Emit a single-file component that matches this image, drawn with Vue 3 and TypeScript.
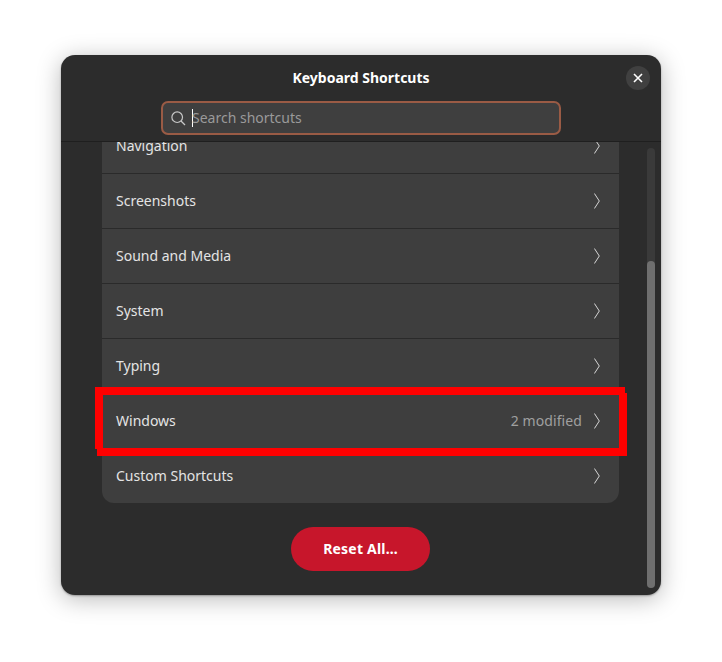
<script setup lang="ts">
const rows = [
  { title: 'Navigation' },
  { title: 'Screenshots' },
  { title: 'Sound and Media' },
  { title: 'System' },
  { title: 'Typing' },
  { title: 'Windows', note: '2 modified' },
  { title: 'Custom Shortcuts' },
]
</script>

<template>
  <div class="page">
    <div class="dialog">
      <header class="header">
        <div class="titleRow">
          <h1 class="title">Keyboard Shortcuts</h1>
          <button class="close" aria-label="Close">
            <svg width="10" height="10" viewBox="0 0 10 10">
              <path d="M1 1 9 9M9 1 1 9" stroke="#fff" stroke-width="1.6" fill="none" />
            </svg>
          </button>
        </div>
        <div class="search">
          <svg class="searchIcon" width="15" height="15" viewBox="0 0 15 15">
            <circle cx="6.2" cy="6.2" r="5.3" stroke="#c8c8c8" stroke-width="1.2" fill="none" />
            <path d="M10 10 14 14" stroke="#c8c8c8" stroke-width="1.2" fill="none" />
          </svg>
          <span class="caret"></span>
          <span class="placeholder">Search shortcuts</span>
        </div>
      </header>

      <div class="body">
        <div class="list">
          <div v-for="row in rows" :key="row.title" class="row">
            <span class="rowTitle">{{ row.title }}</span>
            <span v-if="row.note" class="note">{{ row.note }}</span>
            <svg class="chevron" width="6" height="16" viewBox="0 0 6 16">
              <path d="M0.4 0.5 5.3 8 0.4 15.5" stroke="#d6d6d6" stroke-width="1" fill="none" />
            </svg>
          </div>
        </div>
        <button class="reset"><span class="resetLabel">Reset All…</span></button>
        <div class="scrollbar"><div class="thumb"></div></div>
      </div>

      <!-- hand drawn highlight around the Windows row -->
      <svg class="highlight" width="540" height="80" viewBox="0 0 540 80">
        <rect x="0" y="5" width="530" height="8" fill="#ff0000" />
        <rect x="0" y="5" width="8" height="62" fill="#ff0000" />
        <rect x="2" y="66" width="530" height="8" fill="#ff0000" />
        <rect x="524" y="11" width="8" height="63" fill="#ff0000" />
      </svg>
    </div>
  </div>
</template>

<style>
body {
  background: #ffffff;
}
</style>

<style scoped>
.page {
  width: 722px;
  height: 662px;
  padding: 55px 61px 67px;
  box-sizing: border-box;
  font-family: "Noto Sans", sans-serif;
}

.dialog {
  position: relative;
  width: 600px;
  height: 540px;
  display: flex;
  flex-direction: column;
  border-radius: 14px;
  background: #2c2c2c;
  box-shadow: 0 1px 2px rgba(0, 0, 0, 0.3), 0 4px 24px rgba(0, 0, 0, 0.28);
}

.header {
  height: 87px;
  flex: none;
  box-sizing: border-box;
  display: flex;
  flex-direction: column;
  align-items: center;
  border-bottom: 1px solid #1f1f1f;
  border-radius: 14px 14px 0 0;
}

.titleRow {
  width: 100%;
  height: 46px;
  flex: none;
  display: flex;
  align-items: center;
  justify-content: center;
  position: relative;
}

.title {
  margin: 0 0 2px;
  font-size: 14px;
  font-weight: 700;
  color: #ffffff;
}

.close {
  position: absolute;
  right: 11px;
  top: 11px;
  width: 24px;
  height: 24px;
  padding: 0;
  border: none;
  border-radius: 50%;
  background: #404040;
  display: flex;
  align-items: center;
  justify-content: center;
}

.search {
  width: 400px;
  height: 34px;
  box-sizing: border-box;
  display: flex;
  align-items: center;
  padding-left: 8px;
  border: 2px solid #9a5b45;
  border-radius: 7px;
  background: #3f3f3f;
}

.searchIcon {
  flex: none;
  margin-right: 6px;
}

.caret {
  width: 1px;
  height: 18px;
  background: #ffffff;
}

.placeholder {
  margin: 0 0 2px -1px;
  font-size: 14px;
  color: #9a9a9a;
}

.body {
  position: relative;
  flex: 1;
  min-height: 0;
  overflow: hidden;
  display: flex;
  flex-direction: column;
  align-items: flex-start;
  border-radius: 0 0 14px 14px;
}

.list {
  width: 517px;
  margin: -23px 0 0 41px;
  flex: none;
  border-radius: 12px;
  background: #3e3e3e;
  overflow: hidden;
}

.row {
  height: 55px;
  box-sizing: border-box;
  display: flex;
  align-items: center;
  padding: 0 19px 0 14px;
  border-bottom: 1px solid #2a2a2a;
}

.row:last-child {
  height: 54px;
  border-bottom: none;
}

.rowTitle {
  flex: 1;
  margin-bottom: 2px;
  font-size: 14px;
  color: #e4e4e4;
}

.note {
  margin: 0 12px 2px 0;
  font-size: 14px;
  letter-spacing: 0.1px;
  color: #a0a0a0;
}

.chevron {
  flex: none;
}

.reset {
  align-self: flex-start;
  width: 139px;
  height: 44px;
  margin: 24px 0 0 230px;
  flex: none;
  padding: 0;
  border: none;
  border-radius: 22px;
  background: #c7162b;
  color: #ffffff;
  font-family: inherit;
  font-size: 14px;
  font-weight: 700;
  letter-spacing: 0.2px;
}

.resetLabel {
  position: relative;
  top: -1px;
}

.scrollbar {
  position: absolute;
  top: 6px;
  right: 6px;
  bottom: 7px;
  width: 8px;
  border-radius: 4px;
  background: #3a3a3a;
}

.thumb {
  position: absolute;
  left: 0;
  right: 0;
  top: 113px;
  bottom: 0;
  border-radius: 4px;
  background: #6f6f6f;
}

.highlight {
  position: absolute;
  left: 34px;
  top: 327px;
}
</style>
